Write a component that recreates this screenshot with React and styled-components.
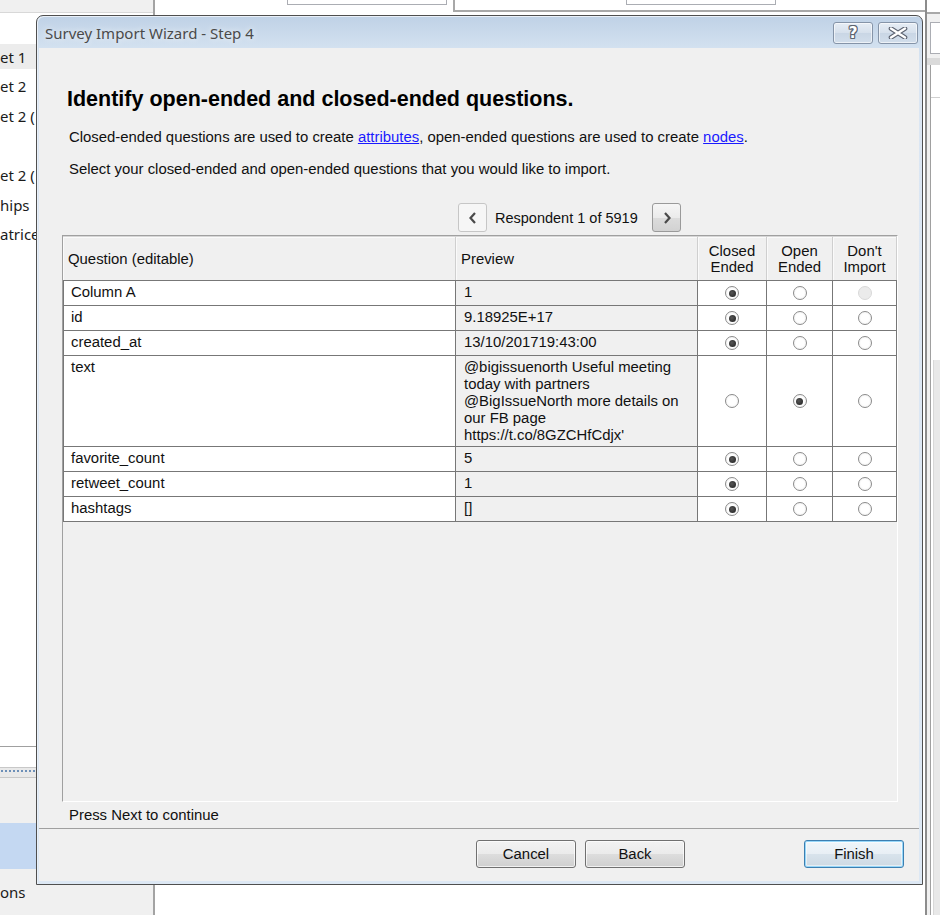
import React from 'react';
import styled, { createGlobalStyle, css } from 'styled-components';

const Global = createGlobalStyle`
  html, body { margin: 0; padding: 0; background: #fff; }
  body { font-family: "Liberation Sans", Arial, sans-serif; }
`;

const Page = styled.div`
  position: relative;
  width: 940px;
  height: 915px;
  overflow: hidden;
  display: flex;
  background: #fff;
`;

/* ---------- background application ---------- */
const LeftPanel = styled.div`
  width: 153px;
  flex: none;
  display: flex;
  flex-direction: column;
  border-right: 2px solid #a3a3a3;
  font-family: "Noto Sans", "Open Sans", sans-serif;
  font-size: 15px;
  color: #1b1b1b;
`;
const PanelTop = styled.div`
  height: 12px;
  flex: none;
  background: #f0f0f0;
  border-bottom: 1px solid #d8d8d8;
`;
const TreeList = styled.div`
  flex: 1;
  background: #fff;
  padding-top: 29px;
  display: flex;
  flex-direction: column;
  border-bottom: 1px solid #a0a0a0;
`;
const TreeItem = styled.div`
  height: 29.6px;
  display: flex;
  align-items: center;
  white-space: nowrap;
  ${p => p.$selected && css`
    background: #ececec;
    box-shadow: inset 0 2px 0 #fff, inset 0 -3px 0 #fff;
  `}
`;
const PanelWhite = styled.div`
  height: 20px;
  flex: none;
  background: #fff;
`;
const Splitter = styled.div`
  height: 11px;
  flex: none;
  background: #e9e9e9;
  border-top: 1px solid #c8c8c8;
  border-bottom: 1px solid #c8c8c8;
  box-sizing: border-box;
  background-image: radial-gradient(circle, #6c8fb8 0.8px, transparent 1.2px);
  background-size: 4px 4px;
  background-position: 0 1px;
  background-repeat: repeat-x;
`;
const NavBlock = styled.div`
  height: ${p => p.$h}px;
  flex: none;
  background: ${p => (p.$active ? '#c4d8f2' : '#f0f0f0')};
  display: flex;
  align-items: center;
`;

const MainArea = styled.div`
  flex: 1;
  display: flex;
  flex-direction: column;
  background: #fff;
`;
const TopRow = styled.div`
  height: 12px;
  display: flex;
  flex: none;
`;
const TopCell = styled.div`
  position: relative;
  box-sizing: border-box;
  ${p => p.$w ? css`width: ${p.$w}px; border-right: 2px solid #a8a8a8;` : css`flex: 1; border-bottom: 2px solid #a8a8a8;`}
`;
const FieldStub = styled.div`
  margin-left: ${p => p.$x}px;
  width: ${p => p.$w}px;
  height: 5px;
  box-sizing: border-box;
  border: 1px solid #abadb3;
  border-top: none;
`;

const RightStrip = styled.div`
  width: 15px;
  flex: none;
  box-sizing: border-box;
  border-left: 2px solid #8c8c8c;
  display: flex;
  flex-direction: column;
  background: #f0f0f0;
`;
const StripTop = styled.div`
  height: 12px;
  background: #fff;
  border-bottom: 2px solid #a8a8a8;
`;
const StripBox = styled.div`
  margin: 8px 0 0 3px;
  height: 30px;
  background: #fff;
  border: 1px solid #abadb3;
  border-right: none;
`;
const StripBand = styled.div`
  margin-top: 4px;
  height: 7px;
  background: #dadada;
`;
const StripInner = styled.div`
  flex: 1;
  margin-left: 3px;
  border-left: 1px solid #a0a0a0;
  background: #fff;
  display: flex;
  flex-direction: column;
`;
const StripHeader = styled.div`
  height: 32px;
  border-bottom: 1px solid #d0d0d0;
`;
const StripScroll = styled.div`
  margin-top: 262px;
  flex: 1;
  margin-left: 2px;
  background: #e8e8e8;
  border-left: 1px solid #d8d8d8;
`;

/* ---------- dialog ---------- */
const Dialog = styled.div`
  position: absolute;
  left: 36px;
  top: 15px;
  width: 887px;
  height: 870px;
  box-sizing: border-box;
  border: 1px solid #4f4f4f;
  border-radius: 7px 7px 0 0;
  background: linear-gradient(#bfd1e6 0px, #d3e1f0 32px, #dbe6f3 60px, #dde8f4 100%);
  display: flex;
  flex-direction: column;
  box-shadow: inset 1px 1px 0 #e9f0f8;
`;
const TitleBar = styled.div`
  height: 32px;
  flex: none;
  display: flex;
  align-items: flex-start;
  padding: 0 4px 0 8px;
`;
const TitleText = styled.div`
  flex: 1;
  margin-top: 8px;
  font-family: "Noto Sans", "Open Sans", sans-serif;
  font-size: 15px;
  color: #4a4a4a;
  line-height: 18px;
  text-shadow: 0 0 6px rgba(255,255,255,0.9);
`;
const CaptionButton = styled.div`
  width: 40px;
  height: 22px;
  margin-top: 6px;
  margin-left: ${p => p.$ml || 0}px;
  box-sizing: border-box;
  border: 1px solid #8594a8;
  border-radius: 3px;
  background: linear-gradient(#e6edf5, #d6e0ec 50%, #c9d6e5 51%, #d2deeb);
  box-shadow: inset 0 0 0 1px rgba(255,255,255,0.6);
  display: flex;
  align-items: center;
  justify-content: center;
`;
const HelpGlyph = styled.span`
  font-family: "DejaVu Sans", sans-serif;
  font-weight: bold;
  font-size: 15px;
  line-height: 1;
  color: #fff;
  text-shadow: -1px 0 #5d6470, 1px 0 #5d6470, 0 -1px #5d6470, 0 1px #5d6470,
    -1px -1px #5d6470, 1px 1px #5d6470, -1px 1px #5d6470, 1px -1px #5d6470;
`;

const Client = styled.div`
  flex: 1;
  margin: 0 3px 3px 2px;
  background: #f0f0f0;
  display: flex;
  flex-direction: column;
  font-family: "Liberation Sans", Arial, sans-serif;
  font-size: 14.9px;
  color: #111;
`;
const Heading = styled.h1`
  margin: 39px 0 0 28px;
  font-size: 21.5px;
  line-height: 24px;
  font-weight: bold;
  color: #000;
`;
const Para = styled.p`
  margin: ${p => p.$mt}px 0 0 30px;
  line-height: 18px;
`;
const Link = styled.a`
  color: #1a1aff;
  text-decoration: underline;
`;
const Navigator = styled.div`
  margin: 25px 0 0 419px;
  height: 29px;
  display: grid;
  grid-template-columns: 29px 165px 29px;
  align-items: center;
`;
const NavButton = styled.div`
  height: 29px;
  box-sizing: border-box;
  border-radius: 3px;
  display: flex;
  align-items: center;
  justify-content: center;
  ${p => p.$flat
    ? css`border: 1px solid #c6c6c6; background: #f6f6f6;`
    : css`border: 1px solid #9a9a9a; background: linear-gradient(#f6f6f6, #ebebeb 50%, #dcdcdc 51%, #d2d2d2);`}
`;
const NavLabel = styled.div`
  padding-left: 8px;
  line-height: 18px;
  font-size: 14.5px;
`;

const GridFrame = styled.div`
  flex: 1;
  margin: 3px 21px 0 23px;
  border-top: 1px solid #a0a0a0;
  border-left: 1px solid #a0a0a0;
  border-bottom: 1px solid #fff;
  border-right: 1px solid #fff;
  background: #f0f0f0;
  display: flex;
  flex-direction: column;
`;
const cols = '393px 242px 69px 66px 64px';
const HeaderRow = styled.div`
  display: grid;
  grid-template-columns: ${cols};
  height: 45px;
  box-sizing: border-box;
  border-bottom: 1px solid #777;
  background: #f0f0f0;
`;
const HeaderCell = styled.div`
  border-right: 1px solid #cfcfcf;
  border-top: 1px solid #d6d6d6;
  box-shadow: inset 1px 1px 0 #fafafa;
  display: flex;
  align-items: center;
  justify-content: ${p => (p.$center ? 'center' : 'flex-start')};
  text-align: ${p => (p.$center ? 'center' : 'left')};
  padding-left: ${p => (p.$center ? 0 : 5)}px;
  line-height: 16px;
  white-space: pre-line;
`;
const DataRow = styled.div`
  display: grid;
  grid-template-columns: ${cols};
  height: ${p => p.$h}px;
`;
const Cell = styled.div`
  border-right: 1px solid #777;
  border-bottom: 1px solid #777;
  background: ${p => (p.$shade ? '#f0f0f0' : '#fff')};
  ${p => p.$first && css`border-left: 1px solid #777;`}
  ${p => p.$radio
    ? css`display: flex; align-items: center; justify-content: center;`
    : css`padding: 3px 0 0 ${p.$first ? 7 : 8}px; line-height: 17px; white-space: pre-line;`}
`;
const Radio = styled.span`
  width: 14px;
  height: 14px;
  box-sizing: border-box;
  border-radius: 50%;
  border: 1px solid #8b8b8b;
  background: radial-gradient(circle at 50% 50%, #fff 0, #fff 45%, #ececec 100%);
  display: flex;
  align-items: center;
  justify-content: center;
  ${p => p.$checked && css`
    &::after {
      content: '';
      width: 7px;
      height: 7px;
      border-radius: 50%;
      background: radial-gradient(circle at 40% 40%, #555, #1f1f1f);
    }
  `}
  ${p => p.$disabled && css`
    border-color: #d9d9d9;
    background: #ebebeb;
  `}
`;

const FooterText = styled.div`
  margin: 4px 0 0 30px;
  line-height: 18px;
`;
const Separator = styled.div`
  margin-top: 4px;
  height: 1px;
  background: #a0a0a0;
`;
const ButtonRow = styled.div`
  margin: 11px 0 13px 0;
  padding-right: 15px;
  display: flex;
  justify-content: flex-end;
`;
const Button = styled.button`
  width: 100px;
  height: 28px;
  margin-left: ${p => p.$ml}px;
  box-sizing: border-box;
  border-radius: 3px;
  font-family: "Liberation Sans", Arial, sans-serif;
  font-size: 14.9px;
  color: #111;
  padding: 0;
  border: 1px solid #707070;
  background: linear-gradient(#f2f2f2, #ebebeb 50%, #dddddd 51%, #cfcfcf);
  box-shadow: inset 0 0 0 1px rgba(255,255,255,0.7);
  ${p => p.$default && css`
    border-color: #3c7fb1;
    box-shadow: inset 0 0 0 1px #97d7f9, inset 0 0 0 2px rgba(255,255,255,0.5);
    background: linear-gradient(#f0f6fa, #e8eff5 50%, #d8e3ec 51%, #cdd9e3);
  `}
`;

const Chevron = ({ dir }) => (
  <svg width="10" height="12" viewBox="0 0 10 12">
    <polyline
      points={dir === 'left' ? '7,1 2.5,6 7,11' : '3,1 7.5,6 3,11'}
      fill="none"
      stroke="#4a4a4a"
      strokeWidth="2.2"
    />
  </svg>
);

const CloseGlyph = () => (
  <svg width="20" height="12" viewBox="0 0 20 12">
    <path d="M3 1.5 L17 10.5 M17 1.5 L3 10.5" stroke="#5b6270" strokeWidth="4.6" strokeLinecap="round" />
    <path d="M3 1.5 L17 10.5 M17 1.5 L3 10.5" stroke="#fff" strokeWidth="2.4" strokeLinecap="round" />
  </svg>
);

const rows = [
  { q: 'Column A', p: '1', sel: 0, disabledDont: true },
  { q: 'id', p: '9.18925E+17', sel: 0 },
  { q: 'created_at', p: '13/10/201719:43:00', sel: 0 },
  {
    q: 'text',
    p: "@bigissuenorth Useful meeting\ntoday with partners\n@BigIssueNorth more details on\nour FB page\nhttps://t.co/8GZCHfCdjx'",
    sel: 1,
    h: 90,
  },
  { q: 'favorite_count', p: '5', sel: 0 },
  { q: 'retweet_count', p: '1', sel: 0 },
  { q: 'hashtags', p: '[]', sel: 0 },
];

export default function App() {
  return (
    <>
      <Global />
      <Page>
        <LeftPanel>
          <PanelTop />
          <TreeList>
            <TreeItem $selected>et 1</TreeItem>
            <TreeItem>et 2</TreeItem>
            <TreeItem>et 2 (</TreeItem>
            <TreeItem />
            <TreeItem>et 2 (</TreeItem>
            <TreeItem>hips</TreeItem>
            <TreeItem>atrices</TreeItem>
          </TreeList>
          <PanelWhite />
          <Splitter />
          <NavBlock $h={45} />
          <NavBlock $h={46} $active />
          <NavBlock $h={46}>ons</NavBlock>
        </LeftPanel>
        <MainArea>
          <TopRow>
            <TopCell $w={300}>
              <FieldStub $x={132} $w={160} />
            </TopCell>
            <TopCell>
              <FieldStub $x={171} $w={150} />
            </TopCell>
          </TopRow>
        </MainArea>
        <RightStrip>
          <StripTop />
          <StripBox />
          <StripBand />
          <StripInner>
            <StripHeader />
            <StripScroll />
          </StripInner>
        </RightStrip>

        <Dialog>
          <TitleBar>
            <TitleText>Survey Import Wizard - Step 4</TitleText>
            <CaptionButton><HelpGlyph>?</HelpGlyph></CaptionButton>
            <CaptionButton $ml={5}><CloseGlyph /></CaptionButton>
          </TitleBar>
          <Client>
            <Heading>Identify open-ended and closed-ended questions.</Heading>
            <Para $mt={17}>
              Closed-ended questions are used to create <Link>attributes</Link>, open-ended questions are used to create <Link>nodes</Link>.
            </Para>
            <Para $mt={14}>Select your closed-ended and open-ended questions that you would like to import.</Para>
            <Navigator>
              <NavButton $flat><Chevron dir="left" /></NavButton>
              <NavLabel>Respondent 1 of 5919</NavLabel>
              <NavButton><Chevron dir="right" /></NavButton>
            </Navigator>
            <GridFrame>
              <HeaderRow>
                <HeaderCell>Question (editable)</HeaderCell>
                <HeaderCell>Preview</HeaderCell>
                <HeaderCell $center>{'Closed\nEnded'}</HeaderCell>
                <HeaderCell $center>{'Open\nEnded'}</HeaderCell>
                <HeaderCell $center>{"Don't\nImport"}</HeaderCell>
              </HeaderRow>
              {rows.map(r => (
                <DataRow key={r.q} $h={(r.h || 24) + 1}>
                  <Cell $first>{r.q}</Cell>
                  <Cell $shade>{r.p}</Cell>
                  <Cell $radio><Radio $checked={r.sel === 0} /></Cell>
                  <Cell $radio><Radio $checked={r.sel === 1} /></Cell>
                  <Cell $radio><Radio $disabled={r.disabledDont} /></Cell>
                </DataRow>
              ))}
            </GridFrame>
            <FooterText>Press Next to continue</FooterText>
            <Separator />
            <ButtonRow>
              <Button>Cancel</Button>
              <Button $ml={9}>Back</Button>
              <Button $ml={119} $default>Finish</Button>
            </ButtonRow>
          </Client>
        </Dialog>
      </Page>
    </>
  );
}
